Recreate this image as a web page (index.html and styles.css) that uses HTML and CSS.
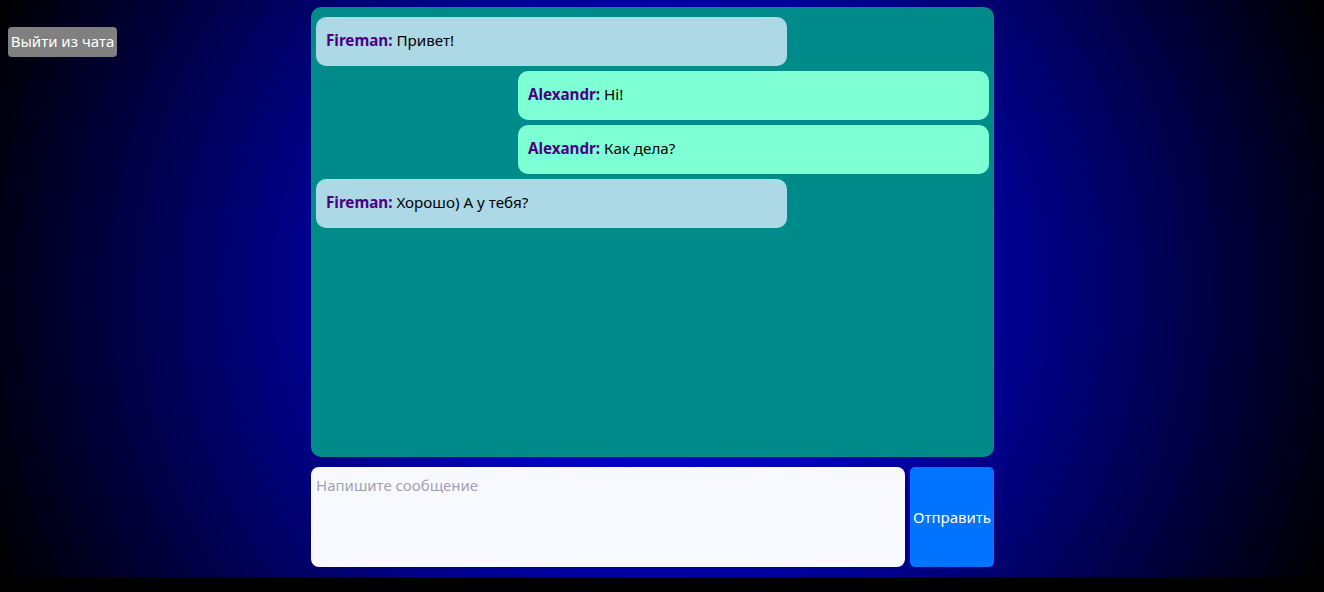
FILE: index.html
```html
<!DOCTYPE html>
<html lang="ru">
<head>
<meta charset="utf-8">
<title>Чат</title>
<link rel="stylesheet" href="styles.css">
</head>
<body>
<div class="page">
  <button class="exit">Выйти из чата</button>
  <div class="chat-col">
    <div class="chat">
      <div class="msg other"><b class="name">Fireman:</b> Привет!</div>
      <div class="msg mine"><b class="name">Alexandr:</b> Hi!</div>
      <div class="msg mine"><b class="name">Alexandr:</b> Как дела?</div>
      <div class="msg other"><b class="name">Fireman:</b> Хорошо) А у тебя?</div>
    </div>
    <div class="composer">
      <textarea class="input" placeholder="Напишите сообщение"></textarea>
      <button class="send">Отправить</button>
    </div>
  </div>
</div>
</body>
</html>
```

FILE: styles.css
```css
html, body {
  margin: 0;
  padding: 0;
  background: #000;
}

body {
  font-family: "Noto Sans", "Open Sans", sans-serif;
  font-size: 16px;
}

.page {
  display: flex;
  align-items: flex-start;
  padding: 7px 0 10px 8px;
  background: radial-gradient(circle, #0000ff 0%, #00008b 50%, #000 100%);
}

.exit {
  width: 109px;
  height: 30px;
  margin-top: 20px;
  padding: 0 0 2px;
  border: none;
  border-radius: 4px;
  background: #808080;
  color: #fff;
  font-family: inherit;
  font-size: 15px;
  white-space: nowrap;
}

.chat-col {
  margin-left: 194px;
  width: 683px;
  display: flex;
  flex-direction: column;
  gap: 10px;
}

.chat {
  height: 450px;
  box-sizing: border-box;
  padding: 10px 5px;
  background: #008b8b;
  border-radius: 10px;
  display: flex;
  flex-direction: column;
  gap: 5px;
}

.msg {
  width: 70%;
  box-sizing: border-box;
  height: 49px;
  display: flex;
  align-items: center;
  padding: 0 10px 3px;
  border-radius: 10px;
  color: #000;
  font-size: 15.2px;
  white-space: pre;
}

.other {
  align-self: flex-start;
  background: #add8e6;
}

.mine {
  align-self: flex-end;
  background: #7fffd4;
}

.name {
  color: #4b0082;
  font-weight: 700;
}

.composer {
  display: flex;
  gap: 5px;
  height: 100px;
}

.input {
  flex: 1;
  box-sizing: border-box;
  height: 100px;
  margin: 0;
  padding: 8px 5px;
  border: none;
  border-radius: 8px;
  background: #f8f8ff;
  font-family: inherit;
  font-size: 15px;
  resize: none;
  outline: none;
}

.input::placeholder {
  color: #a3a3b0;
}

.send {
  width: 84px;
  height: 100px;
  padding: 0;
  border: none;
  border-radius: 5px;
  background: #0073ff;
  color: #fff;
  font-family: inherit;
  font-size: 15px;
}
```
